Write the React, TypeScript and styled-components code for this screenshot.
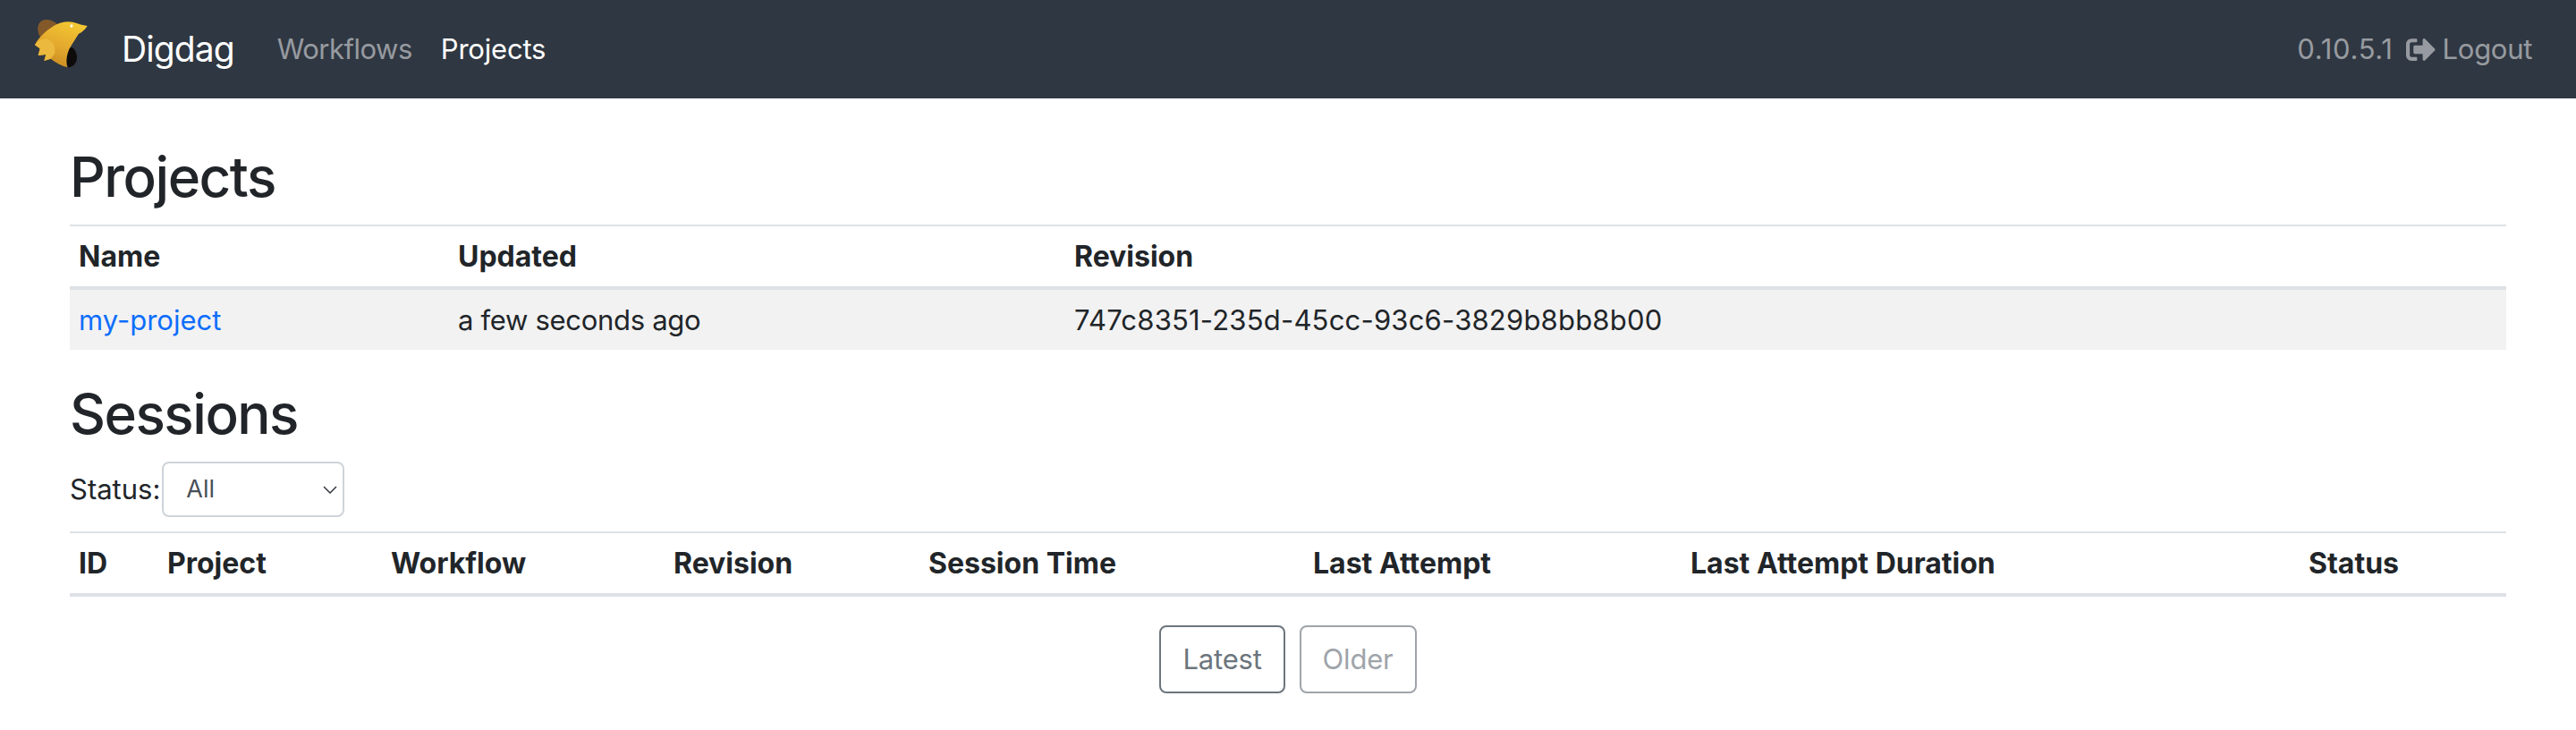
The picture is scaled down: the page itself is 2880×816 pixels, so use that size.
import React from "react";
import styled, { createGlobalStyle } from "styled-components";
import { FaSignOutAlt } from "react-icons/fa";

const GlobalStyle = createGlobalStyle`
  html, body {
    margin: 0;
    padding: 0;
    background: #fff;
    color: #212529;
    font-family: Inter, "Liberation Sans", sans-serif;
    font-size: 31px;
    line-height: 48px;
  }
`;

const Navbar = styled.nav`
  height: 110px;
  background-color: #2f3742;
  display: flex;
  align-items: center;
  padding: 0 49px 0 39px;
`;

const Brand = styled.a`
  display: flex;
  align-items: center;
  color: #fff;
  font-size: 39px;
  letter-spacing: -0.9px;
  margin-right: 48px;
`;

const LogoSvg = styled.svg`
  width: 59px;
  height: 54px;
  margin: 0 38px 12px 0;
`;

const NavLink = styled.a<{ $active?: boolean; $spacing: number }>`
  color: ${(p) => (p.$active ? "#fff" : "rgba(255, 255, 255, 0.5)")};
  letter-spacing: ${(p) => p.$spacing}px;
  margin-right: 32px;
`;

const NavRight = styled.div`
  margin-left: auto;
  display: flex;
  align-items: center;
  color: rgba(255, 255, 255, 0.5);
`;

const Version = styled.span`
  letter-spacing: 0.7px;
`;

const LogoutLink = styled.a`
  display: flex;
  align-items: center;
  margin-left: 14px;
  letter-spacing: -0.3px;

  svg {
    width: 33px;
    height: 33px;
    margin-right: 8px;
  }
`;

const Main = styled.main`
  padding: 0 78px;
`;

const Heading = styled.h2<{ $top: number }>`
  margin: ${(p) => p.$top}px 0 15px;
  font-size: 62px;
  font-weight: 500;
  line-height: 77px;
  letter-spacing: -1.5px;
`;

const Table = styled.table`
  width: 100%;
  border-collapse: separate;
  border-spacing: 0;
  table-layout: fixed;
`;

const HeadCell = styled.th<{ $w: number }>`
  width: ${(p) => p.$w}px;
  box-sizing: border-box;
  padding: 0 10px;
  height: 73px;
  text-align: left;
  font-size: 32px;
  font-weight: 700;
  border-top: 2px solid #dee2e6;
  border-bottom: 4px solid #dee2e6;
`;

const Row = styled.tr`
  background: #f2f2f2;
`;

const Cell = styled.td<{ $spacing?: number }>`
  padding: 0 10px;
  height: 67px;
  box-sizing: border-box;
  letter-spacing: ${(p) => p.$spacing ?? 0}px;
`;

const Link = styled.a`
  color: #0d6efd;
`;

const Filter = styled.div`
  display: flex;
  align-items: center;
  margin-bottom: 16px;
  height: 62px;
`;

const SelectBox = styled.div`
  box-sizing: border-box;
  width: 204px;
  height: 62px;
  margin-left: 2px;
  border: 2px solid #ced4da;
  border-radius: 8px;
  display: flex;
  align-items: center;
  justify-content: space-between;
  padding: 0 6px 0 25px;
  font-size: 27px;
  color: #495057;
`;

const Chevron = styled.svg`
  width: 16px;
  height: 9px;
`;

const Pager = styled.div`
  display: flex;
  justify-content: center;
  gap: 16px;
  margin-top: 32px;
`;

const PageButton = styled.button<{ $disabled?: boolean }>`
  box-sizing: border-box;
  height: 76px;
  padding: 0 24px;
  background: #fff;
  font: inherit;
  letter-spacing: -0.2px;
  color: #6c757d;
  border: 2px solid #6c757d;
  border-radius: 8px;
  opacity: ${(p) => (p.$disabled ? 0.65 : 1)};
`;

const projectCols: [string, number][] = [
  ["Name", 424],
  ["Updated", 689],
  ["Revision", 1611],
];

const sessionCols: [string, number][] = [
  ["ID", 99],
  ["Project", 250],
  ["Workflow", 316],
  ["Revision", 285],
  ["Session Time", 430],
  ["Last Attempt", 422],
  ["Last Attempt Duration", 691],
  ["Status", 231],
];

// coordinates traced from the reference at 3x
const Logo = () => (
  <LogoSvg viewBox="57 37 177 162">
    <defs>
      <linearGradient id="logoBody" x1="0.75" y1="0" x2="0.35" y2="1">
        <stop offset="0" stopColor="#f4c832" />
        <stop offset="0.55" stopColor="#e3a92e" />
        <stop offset="1" stopColor="#c98a20" />
      </linearGradient>
    </defs>
    <path d="M80 102C66 88 62 60 74 46 88 30 118 36 136 56z" fill="#84592a" />
    <path d="M172 132C186 124 198 146 198 164 198 182 184 198 168 197 160 176 162 150 172 132z" fill="#0e0c0a" />
    <path
      d="M120 58C140 46 165 40 188 46 204 52 218 56 233 58 224 72 214 80 204 84 194 100 182 118 172 136 164 156 160 176 166 197 146 192 126 180 110 168L88 175 94 154 68 157 74 134 57 122C64 104 90 76 120 58z"
      fill="url(#logoBody)"
    />
    <path d="M57 122C66 108 84 98 100 102 118 108 128 128 124 150L110 168 88 175 94 154 68 157 74 134z" fill="#eab93d" />
    <circle cx="180" cy="58" r="5" fill="#fffbe6" />
  </LogoSvg>
);

export default function App() {
  return (
    <>
      <GlobalStyle />
      <Navbar>
        <Brand>
          <Logo />
          Digdag
        </Brand>
        <NavLink $spacing={-0.5}>Workflows</NavLink>
        <NavLink $active $spacing={-0.2}>
          Projects
        </NavLink>
        <NavRight>
          <Version>0.10.5.1</Version>
          <LogoutLink>
            <FaSignOutAlt />
            Logout
          </LogoutLink>
        </NavRight>
      </Navbar>
      <Main>
        <Heading $top={49}>Projects</Heading>
        <Table>
          <thead>
            <tr>
              {projectCols.map(([label, w]) => (
                <HeadCell key={label} $w={w}>
                  {label}
                </HeadCell>
              ))}
            </tr>
          </thead>
          <tbody>
            <Row>
              <Cell>
                <Link>my-project</Link>
              </Cell>
              <Cell $spacing={-0.3}>a few seconds ago</Cell>
              <Cell $spacing={0.2}>747c8351-235d-45cc-93c6-3829b8bb8b00</Cell>
            </Row>
          </tbody>
        </Table>
        <Heading $top={33}>Sessions</Heading>
        <Filter>
          Status:
          <SelectBox>
            All
            <Chevron viewBox="0 0 16 9">
              <path d="M1 1l7 7 7-7" fill="none" stroke="#343a40" strokeWidth="1.5" />
            </Chevron>
          </SelectBox>
        </Filter>
        <Table>
          <thead>
            <tr>
              {sessionCols.map(([label, w]) => (
                <HeadCell key={label} $w={w}>
                  {label}
                </HeadCell>
              ))}
            </tr>
          </thead>
        </Table>
        <Pager>
          <PageButton>Latest</PageButton>
          <PageButton $disabled>Older</PageButton>
        </Pager>
      </Main>
    </>
  );
}
